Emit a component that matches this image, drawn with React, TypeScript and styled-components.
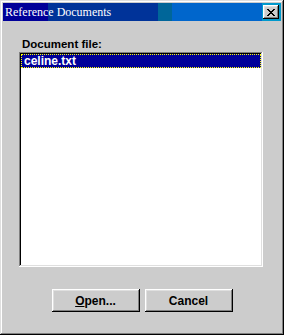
import styled, { createGlobalStyle } from "styled-components";

const GlobalStyle = createGlobalStyle`
  html, body {
    margin: 0;
    padding: 0;
    background: #cccccc;
  }
  * {
    box-sizing: border-box;
  }
`;

const Window = styled.div`
  width: 284px;
  height: 335px;
  padding: 3px;
  display: flex;
  flex-direction: column;
  background: #cccccc;
  box-shadow: inset -1px -1px #000000, inset 1px 1px #dfdfdf,
    inset -2px -2px #808080, inset 2px 2px #ffffff;
  font-family: "Liberation Sans", Arial, sans-serif;
  font-size: 12px;
  font-weight: bold;
  color: #000000;
`;

const TitleBar = styled.div`
  height: 18px;
  display: flex;
  align-items: center;
  justify-content: space-between;
  padding: 0 2px 0 2px;
  background: linear-gradient(
    to right,
    #000099 0px,
    #000099 45px,
    #003399 45px,
    #003399 155px,
    #006699 155px,
    #006699 169px,
    #0066cc 169px,
    #0066cc 259px,
    #0099cc 259px,
    #0099cc 100%
  );
`;

const Title = styled.span`
  font-family: "Liberation Serif", "Times New Roman", serif;
  font-weight: normal;
  font-size: 12px;
  color: #ffffff;
  line-height: 18px;
`;

const CloseButton = styled.button`
  width: 16px;
  height: 14px;
  padding: 0;
  border: none;
  display: flex;
  align-items: center;
  justify-content: center;
  background: #cccccc;
  box-shadow: inset -1px -1px #000000, inset 1px 1px #ffffff,
    inset -2px -2px #808080, inset 2px 2px #dfdfdf;
`;

const Body = styled.div`
  flex: 1;
  display: flex;
  flex-direction: column;
  padding: 17px 18px 0 16px;
`;

const Label = styled.div`
  height: 14px;
  line-height: 13px;
  font-size: 11.5px;
  padding-left: 3px;
`;

const ListBox = styled.div`
  height: 215px;
  padding: 2px;
  background: #ffffff;
  box-shadow: inset -1px -1px #ffffff, inset 1px 1px #808080,
    inset -2px -2px #dfdfdf, inset 2px 2px #000000;
`;

const ListItem = styled.div<{ selected?: boolean }>`
  height: 14px;
  line-height: 14px;
  padding-left: 3px;
  color: ${(props) => (props.selected ? "#ffffff" : "#000000")};
  background: ${(props) => (props.selected ? "#000099" : "transparent")};
  outline: ${(props) => (props.selected ? "1px dotted #ffff00" : "none")};
  outline-offset: -1px;
`;

const ButtonRow = styled.div`
  display: flex;
  justify-content: center;
  gap: 5px;
  margin-top: 22px;
  padding-left: 2px;
`;

const Button = styled.button`
  width: 88px;
  height: 23px;
  padding: 0;
  border: none;
  background: #cccccc;
  font-family: "Liberation Sans", Arial, sans-serif;
  font-size: 12px;
  font-weight: bold;
  color: #000000;
  box-shadow: inset -1px -1px #000000, inset 1px 1px #ffffff,
    inset -2px -2px #808080, inset 2px 2px #dfdfdf;
`;

const Hotkey = styled.span`
  text-decoration: underline;
`;

const files = ["celine.txt"];

function App() {
  return (
    <>
      <GlobalStyle />
      <Window>
        <TitleBar>
          <Title>Reference Documents</Title>
          <CloseButton aria-label="Close">
            <svg width="8" height="7" viewBox="0 0 8 7">
              <path
                d="M0 0h2v1h1v1h2v-1h1v-1h2v1h-1v1h-1v1h-1v1h1v1h1v1h1v1h-2v-1h-1v-1h-2v1h-1v1h-2v-1h1v-1h1v-1h1v-1h-1v-1h-1v-1h-1z"
                fill="#000000"
              />
            </svg>
          </CloseButton>
        </TitleBar>
        <Body>
          <Label>Document file:</Label>
          <ListBox>
            {files.map((f, i) => (
              <ListItem key={f} selected={i === 0}>
                {f}
              </ListItem>
            ))}
          </ListBox>
          <ButtonRow>
            <Button>
              <Hotkey>O</Hotkey>pen...
            </Button>
            <Button>Cancel</Button>
          </ButtonRow>
        </Body>
      </Window>
    </>
  );
}

export default App;
